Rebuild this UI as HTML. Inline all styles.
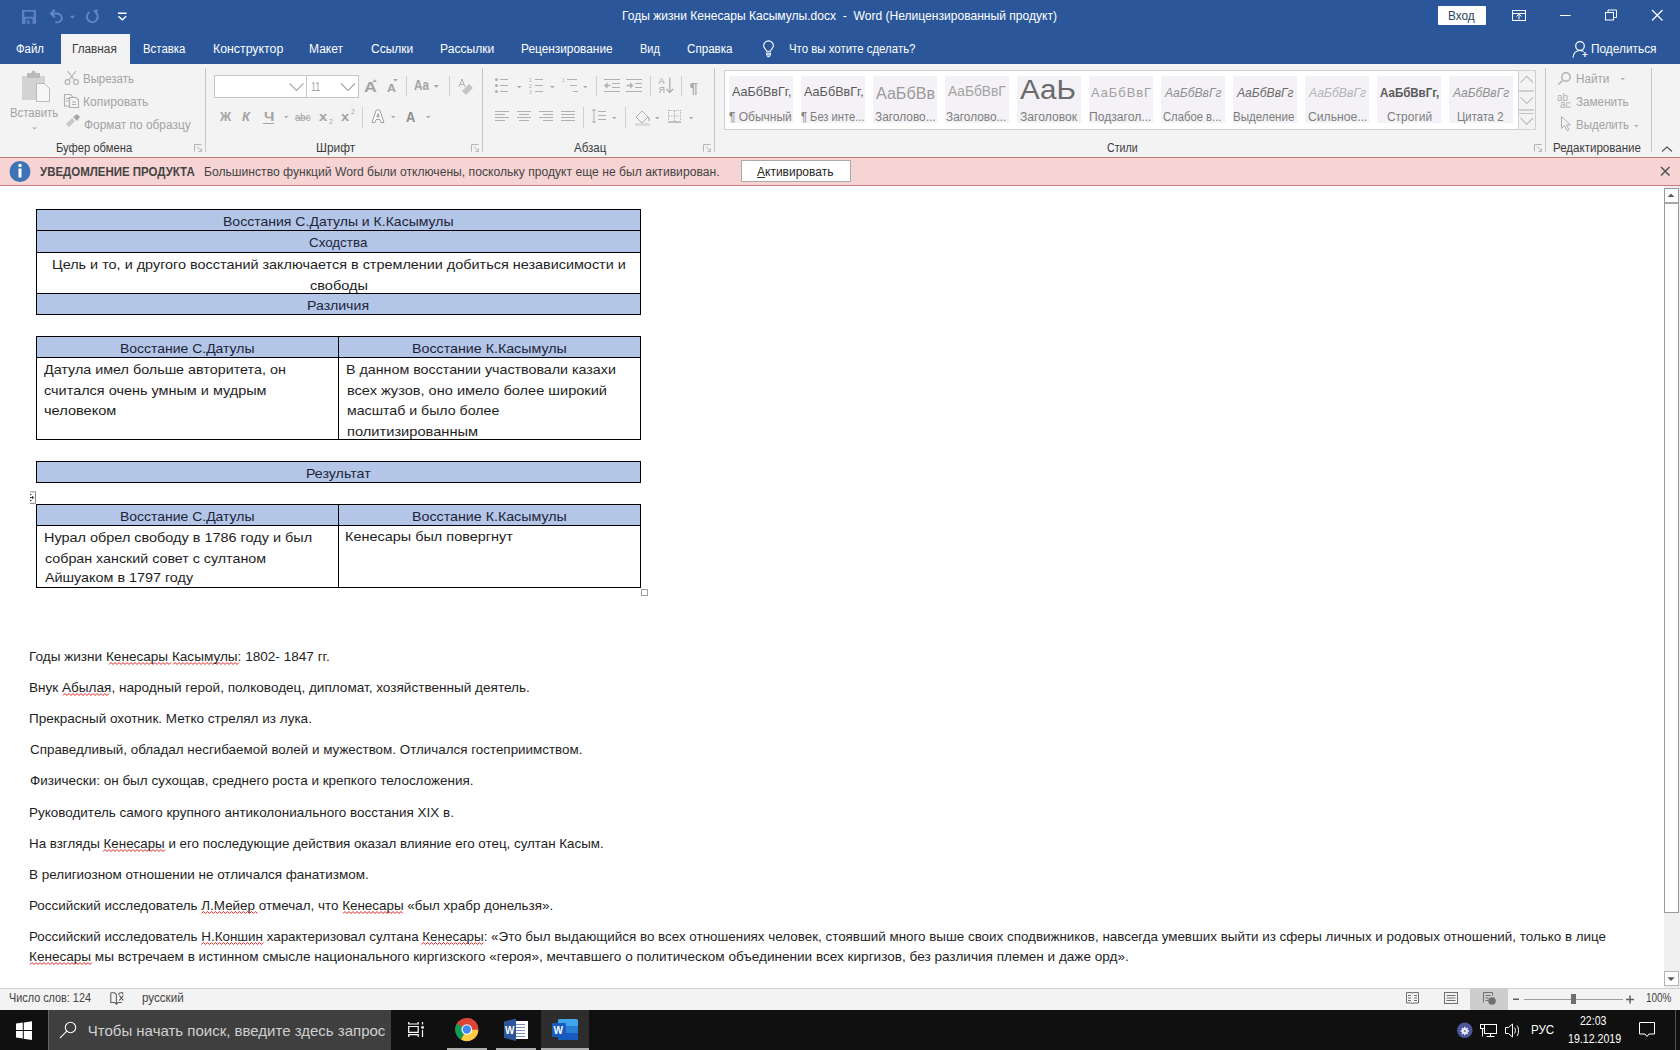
<!DOCTYPE html>
<html><head><meta charset="utf-8"><title>Word</title>
<style>
html,body{margin:0;padding:0}
body{width:1680px;height:1050px;overflow:hidden;position:relative;background:#fff;font-family:"Liberation Sans",sans-serif}
.a{position:absolute}
.t{position:absolute;white-space:nowrap;transform-origin:0 0}
svg{position:absolute;overflow:visible}
</style></head><body>
<!-- ===== TITLE + TABS ===== -->
<div class="a" style="left:0;top:0;width:1680px;height:64px;background:#2b579a"></div>
<div class="a" style="left:61px;top:34px;width:69px;height:30px;background:#f3f3f3"></div>
<!-- QAT icons -->
<svg style="left:0;top:0" width="140" height="34">
  <rect x="22" y="10" width="14" height="13.8" fill="#5f82c2"/>
  <rect x="24.3" y="11.6" width="9.4" height="5.2" fill="#2b579a"/>
  <rect x="25.6" y="18.6" width="7" height="5.2" fill="#2b579a"/>
  <rect x="27.2" y="20.4" width="2.2" height="3.4" fill="#5f82c2"/>
  <g fill="none" stroke="#628ac8" stroke-width="1.9">
    <path d="M51 13.5h5.5c3.2 0 5.3 2.2 5.3 4.6s-2 4.3-5 4.3h-1.5"/>
    <path d="M54.8 9.8L51 13.5l3.8 3.7"/>
    <path d="M89.4 12.2A5.4 5.4 0 1 0 95.8 12.6"/>
  </g>
  <path d="M93.2 10.2l4.6-0.6-1.2 4.6z" fill="#628ac8"/>
  <path d="M69.8 15.8h5.2l-2.6 2.6z" fill="#628ac8"/>
  <g fill="none" stroke="#ffffff" stroke-width="1.4">
    <path d="M118 13.3h8.6M118.4 16.2l3.9 3.6 3.9-3.6"/>
  </g>
</svg>
<!-- window buttons -->
<div class="a" style="left:1438px;top:6px;width:48px;height:19px;background:#ffffff;border-radius:1px"></div>
<svg style="left:0;top:0" width="1680" height="64">
  <g fill="none" stroke="#ffffff" stroke-width="1">
    <rect x="1512.5" y="10.5" width="13" height="10"/>
    <path d="M1512.5 13.5h13M1519 19.5v-5M1516.5 16.5l2.5-2.5 2.5 2.5"/>
    <path d="M1560 15.5h10.5"/>
    <rect x="1605.5" y="12.5" width="8" height="7.5"/>
    <path d="M1608 12.5v-2.5h8.5v7.5h-2.5"/>
    <path d="M1652 10l10.5 10.5M1662.5 10l-10.5 10.5" stroke-width="1.2"/>
  </g>
  <!-- lightbulb -->
  <g fill="none" stroke="#ffffff" stroke-width="1.1">
    <path d="M766.6 51.3C766.6 49.6 763.6 48.4 763.6 45.8A4.9 4.9 0 0 1 773.4 45.8C773.4 48.4 770.4 49.6 770.4 51.3Z"/>
    <rect x="766.6" y="53.2" width="3.8" height="1.8"/>
    <path d="M767.2 56.6h2.6"/>
  </g>
  <!-- person -->
  <g fill="none" stroke="#ffffff" stroke-width="1.2">
    <circle cx="1580" cy="46" r="4.3"/>
    <path d="M1573 57.5c0.5-4.5 3-7 7-7 1.5 0 2.7 0.4 3.6 1"/>
    <path d="M1582.5 54.5h5M1585 52v5"/>
  </g>
</svg>

<!-- ===== RIBBON ===== -->
<div class="a" style="left:0;top:64px;width:1680px;height:93px;background:#f3f3f3"></div>
<!-- group separators -->
<div class="a" style="left:205px;top:68px;width:1px;height:84px;background:#c8c8c8"></div>
<div class="a" style="left:482px;top:68px;width:1px;height:84px;background:#c8c8c8"></div>
<div class="a" style="left:714px;top:68px;width:1px;height:84px;background:#c8c8c8"></div>
<div class="a" style="left:1545px;top:68px;width:1px;height:84px;background:#c8c8c8"></div>
<div class="a" style="left:1651px;top:68px;width:1px;height:84px;background:#c8c8c8"></div>
<!-- launchers -->
<svg style="left:0;top:0" width="1680" height="160">
  <g fill="none" stroke="#b3b3b3" stroke-width="1">
    <path d="M194.5 151.5v-7h7M197 146.5l4.5 4.5M198.5 151.5h3v-3"/>
    <path d="M471.5 151.5v-7h7M474 146.5l4.5 4.5M475.5 151.5h3v-3"/>
    <path d="M703.5 151.5v-7h7M706 146.5l4.5 4.5M707.5 151.5h3v-3"/>
    <path d="M1534.5 151.5v-7h7M1537 146.5l4.5 4.5M1538.5 151.5h3v-3"/>
  </g>
  <path d="M1662 151.5l5-4.5 5 4.5" fill="none" stroke="#555" stroke-width="1.1"/>
</svg>
<!-- clipboard icons -->
<svg style="left:0;top:0" width="210" height="160">
  <rect x="22" y="76" width="23" height="24" fill="#d3d3d3"/>
  <rect x="27" y="73" width="13" height="5" fill="#b9b9b9"/>
  <circle cx="33.5" cy="72.5" r="2" fill="#b9b9b9"/>
  <path d="M36.5 83.5h8l5 5v13h-13z" fill="#f7f7f7" stroke="#b9b9b9"/>
  <path d="M32 127.5h5l-2.5 2z" fill="#b0b0b0"/>
  <g fill="none" stroke="#b0b0b0" stroke-width="1.1">
    <path d="M67.5 71l7 9M76 71l-7 9"/>
    <circle cx="67.5" cy="82" r="2.4"/>
    <circle cx="76" cy="82" r="2.4"/>
    <path d="M64.5 94.5h6l2 2v9.5h-8z"/>
    <path d="M69.5 97.5h6.5l2.5 2.5v7.5h-9z" fill="#f3f3f3"/>
    <path d="M66 98.5h3M66 101h3M72 102h4M72 104.5h4"/>
  </g>
  <path d="M66 124l6-6 3 3-6 6z" fill="#c8c8c8"/>
  <path d="M73 117l4-3 3 3-3 4z" fill="#a8a8a8"/>
</svg>
<!-- font group controls -->
<div class="a" style="left:214px;top:75px;width:92px;height:21px;background:#fff;border:1px solid #c6c6c6"></div>
<div class="a" style="left:306px;top:75px;width:51px;height:21px;background:#fff;border:1px solid #c6c6c6"></div>
<svg style="left:0;top:0" width="720" height="160">
  <g fill="none" stroke="#a8a8a8" stroke-width="1.1">
    <path d="M289.5 83.5l7 7 7-7M341 83.5l7 7 7-7"/>
  </g>
  <g fill="#a8a8a8">
    <path d="M372.5 82l2.2-2.8 2.2 2.8z"/>
    <path d="M393 79h5l-2.5 2.5z"/>
    <path d="M433.5 85h5.5l-2.75 2.75z"/>
    <path d="M284 116h4.5l-2.25 2.25z"/>
    <path d="M391 116h4.5l-2.25 2.25z"/>
    <path d="M426 116h4.5l-2.25 2.25z"/>
    <path d="M517 86h4.5l-2.25 2.25z"/>
    <path d="M550 86h4.5l-2.25 2.25z"/>
    <path d="M583 86h4.5l-2.25 2.25z"/>
    <path d="M612 117h4.5l-2.25 2.25z"/>
    <path d="M655 117h4.5l-2.25 2.25z"/>
    <path d="M689 117h4.5l-2.25 2.25z"/>
  </g>
  <g fill="#d0d0d0"><rect x="406" y="76" width="1" height="20"/><rect x="449" y="76" width="1" height="20"/><rect x="362" y="107" width="1" height="21"/>
  <rect x="596" y="76" width="1" height="20"/><rect x="650" y="76" width="1" height="20"/><rect x="681" y="76" width="1" height="20"/>
  <rect x="583" y="107" width="1" height="21"/><rect x="625" y="107" width="1" height="21"/></g>
  <path d="M372 122.5L376.3 110h3.4L384 122.5h-3l-1-3h-4l-1 3zM376.8 117h2.4L378 113.3z" fill="#ffffff" fill-rule="evenodd" stroke="#a0a0a0" stroke-width="1"/>
  <!-- eraser -->
  <path d="M462 91l7-7 4 4-7 7z" fill="#c4c4c4"/>
  <path d="M459 87l3-8 3 8M460 84.5h4" fill="none" stroke="#b0b0b0" stroke-width="1"/>
  <!-- underline for Ч, subscript digits -->
  <rect x="263" y="123" width="11" height="1" fill="#a8a8a8"/>
  <path d="M295 118h16" stroke="#a8a8a8" stroke-width="1"/>
  <text x="329" y="124" font-size="7" fill="#a8a8a8" font-family="Liberation Sans">2</text>
  <text x="351" y="114" font-size="7" fill="#a8a8a8" font-family="Liberation Sans">2</text>
  <!-- paragraph icons -->
  <g fill="none" stroke="#b0b0b0" stroke-width="1">
    <path d="M500 79.5h8M500 85.5h8M500 91.5h8"/>
    <path d="M535 79.5h8M535 85.5h8M535 91.5h8"/>
    <path d="M567 79.5h10M570 85.5h7M573 91.5h5"/>
    <path d="M604 79.5h16M612 83.5h8M612 87.5h8M604 91.5h16"/>
    <path d="M626 79.5h16M635 83.5h7M635 87.5h7M626 91.5h16"/>
    <path d="M669.8 77.5v15M666.6 89l3.2 3.5 3.2-3.5" stroke-width="1.3"/>
    <path d="M495 111.5h14M495 114.5h10M495 117.5h14M495 120.5h10"/>
    <path d="M517 111.5h14M519 114.5h10M517 117.5h14M519 120.5h10"/>
    <path d="M539 111.5h14M543 114.5h10M539 117.5h14M543 120.5h10"/>
    <path d="M561 111.5h14M561 114.5h14M561 117.5h14M561 120.5h14"/>
    <path d="M598 111.5h8M598 115.5h8M598 119.5h8M594 109v14M592 111l2-2 2 2M592 121l2 2 2-2"/>
    <path d="M668.5 110v11M680.5 110v11M669 110.5h11M674.5 111v10M669 116h11" stroke-dasharray="1 1.2" stroke="#a8a8a8"/>
    <path d="M668 122h13" stroke="#a0a0a0" stroke-width="1.2"/>
  </g>
  <g fill="#b0b0b0">
    <circle cx="496.5" cy="79.5" r="1.5"/><circle cx="496.5" cy="85.5" r="1.5"/><circle cx="496.5" cy="91.5" r="1.5"/>
    <path d="M604 85.5l3.5-3.2v6.4z"/><path d="M610.5 85.5h-4" stroke="#b0b0b0" stroke-width="1.5"/><path d="M633.5 85.5l-3.5-3.2v6.4z"/><path d="M626.5 85.5h4" stroke="#b0b0b0" stroke-width="1.5"/>
  </g>
  <text x="529" y="82" font-size="5" fill="#b0b0b0" font-family="Liberation Sans">1</text>
  <text x="529" y="88" font-size="5" fill="#b0b0b0" font-family="Liberation Sans">2</text>
  <text x="529" y="94" font-size="5" fill="#b0b0b0" font-family="Liberation Sans">3</text>
  <text x="562" y="82" font-size="5" fill="#b0b0b0" font-family="Liberation Sans">1</text>
  <text x="658.6" y="84.3" font-size="9" fill="#a8a8a8" font-family="Liberation Sans">А</text>
  <text x="658.6" y="92.6" font-size="9" fill="#a8a8a8" font-family="Liberation Sans">Я</text>
  <text x="689.5" y="93" font-size="15" fill="#a8a8a8" font-family="Liberation Sans" font-weight="700">¶</text>
  <!-- shading -->
  <path d="M636 117l6-6 6 6-6 6z" fill="none" stroke="#b0b0b0" stroke-width="1"/>
  <path d="M648 117c1 2 2 3 1 4" fill="none" stroke="#b0b0b0" stroke-width="1.5"/>
  <rect x="635" y="123" width="15" height="3" fill="#dcdcdc"/>
</svg>
<!-- styles gallery -->
<div class="a" style="left:724px;top:70px;width:809px;height:58px;background:#ffffff;border:1px solid #cfcfcf"></div>
<div class="a" style="left:729px;top:76px;width:64px;height:47px;background:#f4f2f6"></div>
<div class="a" style="left:801px;top:76px;width:64px;height:47px;background:#f4f2f6"></div>
<div class="a" style="left:873px;top:76px;width:64px;height:47px;background:#f4f2f6"></div>
<div class="a" style="left:945px;top:76px;width:64px;height:47px;background:#f4f2f6"></div>
<div class="a" style="left:1017px;top:76px;width:64px;height:47px;background:#f4f2f6"></div>
<div class="a" style="left:1089px;top:76px;width:64px;height:47px;background:#f4f2f6"></div>
<div class="a" style="left:1161px;top:76px;width:64px;height:47px;background:#f4f2f6"></div>
<div class="a" style="left:1233px;top:76px;width:64px;height:47px;background:#f4f2f6"></div>
<div class="a" style="left:1305px;top:76px;width:64px;height:47px;background:#f4f2f6"></div>
<div class="a" style="left:1377px;top:76px;width:64px;height:47px;background:#f4f2f6"></div>
<div class="a" style="left:1449px;top:76px;width:64px;height:47px;background:#f4f2f6"></div>
<div class="a" style="left:873px;top:76px;width:64px;height:47px;overflow:hidden"></div>
<div class="a" style="left:1518px;top:70px;width:16px;height:58px;background:#f3f3f3;border:1px solid #d4d4d4;border-right:1px solid #cfcfcf"></div>
<svg style="left:0;top:0" width="1680" height="160">
  <g fill="none" stroke="#c0c0c0" stroke-width="1">
    <path d="M1519 91h15M1519 110h15" stroke-width="2" stroke="#d0d0d0"/>
    <path d="M1519 113.5h15" stroke="#c4c4c4"/>
    <path d="M1520.5 82.5l6.3-6.2 6.3 6.2M1520.5 97.3l6.3 6.2 6.3-6.2M1520.5 118l6.3 6.2 6.3-6.2" stroke="#bdbdbd" stroke-width="1.1"/>
  </g>
  <!-- editing icons -->
  <g fill="none" stroke="#b0b0b0" stroke-width="1.4">
    <circle cx="1566" cy="77" r="4.2"/>
    <path d="M1562.5 80.5l-4 4"/>
  </g>
  <path d="M1620.5 78h4.5l-2.25 2.25z" fill="#b0b0b0"/>
  <path d="M1634 125h4.5l-2.25 2.25z" fill="#b0b0b0"/>
  <text x="1557" y="101" font-size="10" fill="#b0b0b0" font-family="Liberation Sans">ab</text>
  <text x="1560" y="108" font-size="10" fill="#b0b0b0" font-family="Liberation Sans">ac</text>
  <path d="M1561.5 116.5v12l3-3 2.5 5 2-1-2.5-4.5h4z" fill="none" stroke="#b0b0b0" stroke-width="1"/>
</svg>

<!-- ===== NOTIFICATION ===== -->
<div class="a" style="left:0;top:157px;width:1680px;height:27px;background:#f7d4d4;border-top:1px solid #c4787e;border-bottom:1px solid #c4787e"></div>
<svg style="left:0;top:0" width="1680" height="190">
  <circle cx="20" cy="171.5" r="10.5" fill="#3c74b6"/>
  <circle cx="20" cy="165.5" r="1.7" fill="#fff"/>
  <rect x="18.5" y="168.5" width="3" height="9" fill="#fff"/>
  <path d="M1661 167l8.5 8.5M1669.5 167l-8.5 8.5" stroke="#555" stroke-width="1.6"/>
</svg>
<div class="a" style="left:741px;top:160px;width:108px;height:20px;background:#ffffff;border:1px solid #a9a9a9"></div>
<div class="a" style="left:757px;top:177px;width:8px;height:1px;background:#333"></div>

<!-- ===== DOCUMENT ===== -->
<!-- table 1 -->
<div class="a" style="left:36px;top:209px;width:603px;height:104px;border:1px solid #000;background:#fff"></div>
<div class="a" style="left:37px;top:210px;width:603px;height:20px;background:#b4c6e7"></div>
<div class="a" style="left:37px;top:231px;width:603px;height:21px;background:#b4c6e7"></div>
<div class="a" style="left:37px;top:294px;width:603px;height:20px;background:#b4c6e7"></div>
<div class="a" style="left:36px;top:230px;width:605px;height:1px;background:#000"></div>
<div class="a" style="left:36px;top:252px;width:605px;height:1px;background:#000"></div>
<div class="a" style="left:36px;top:293px;width:605px;height:1px;background:#000"></div>
<!-- table 2 -->
<div class="a" style="left:36px;top:336px;width:603px;height:102px;border:1px solid #000;background:#fff"></div>
<div class="a" style="left:37px;top:337px;width:603px;height:20px;background:#b4c6e7"></div>
<div class="a" style="left:36px;top:357px;width:605px;height:1px;background:#000"></div>
<div class="a" style="left:338px;top:336px;width:1px;height:104px;background:#000"></div>
<!-- table 3 -->
<div class="a" style="left:36px;top:461px;width:603px;height:20px;border:1px solid #000;background:#b4c6e7"></div>
<!-- marker -->
<svg style="left:0;top:0" width="60" height="520">
  <path d="M30 491.8h5.5v11.6h-5.5" fill="none" stroke="#8a8a8a" stroke-width="1"/>
  <circle cx="30.6" cy="494.5" r="0.8" fill="#333"/><circle cx="30.6" cy="500.5" r="0.8" fill="#333"/>
  <path d="M30 497.5h3.2M32 495.8l1.7 1.7-1.7 1.7" stroke="#333" stroke-width="1" fill="none"/>
</svg>
<!-- table 4 -->
<div class="a" style="left:36px;top:504px;width:603px;height:82px;border:1px solid #000;background:#fff"></div>
<div class="a" style="left:37px;top:505px;width:603px;height:20px;background:#b4c6e7"></div>
<div class="a" style="left:36px;top:525px;width:605px;height:1px;background:#000"></div>
<div class="a" style="left:338px;top:504px;width:1px;height:84px;background:#000"></div>
<div class="a" style="left:641px;top:589px;width:5px;height:5px;border:1px solid #a0a0a0;background:#fff"></div>
<!-- spelling squiggles -->
<svg style="left:0;top:0" width="1680" height="1000"><path d="M109.0 664.5L111.0 662.5L113.0 664.5L115.0 662.5L117.0 664.5L119.0 662.5L121.0 664.5L123.0 662.5L125.0 664.5L127.0 662.5L129.0 664.5L131.0 662.5L133.0 664.5L135.0 662.5L137.0 664.5L139.0 662.5L141.0 664.5L143.0 662.5L145.0 664.5L147.0 662.5L149.0 664.5L151.0 662.5L153.0 664.5L155.0 662.5L157.0 664.5L159.0 662.5L161.0 664.5L163.0 662.5L165.0 664.5L167.0 662.5L169.0 664.5L171.0 662.5 M173.0 664.5L175.0 662.5L177.0 664.5L179.0 662.5L181.0 664.5L183.0 662.5L185.0 664.5L187.0 662.5L189.0 664.5L191.0 662.5L193.0 664.5L195.0 662.5L197.0 664.5L199.0 662.5L201.0 664.5L203.0 662.5L205.0 664.5L207.0 662.5L209.0 664.5L211.0 662.5L213.0 664.5L215.0 662.5L217.0 664.5L219.0 662.5L221.0 664.5L223.0 662.5L225.0 664.5L227.0 662.5L229.0 664.5L231.0 662.5L233.0 664.5L235.0 662.5L237.0 664.5L239.0 662.5 M63.0 695.5L65.0 693.5L67.0 695.5L69.0 693.5L71.0 695.5L73.0 693.5L75.0 695.5L77.0 693.5L79.0 695.5L81.0 693.5L83.0 695.5L85.0 693.5L87.0 695.5L89.0 693.5L91.0 695.5L93.0 693.5L95.0 695.5L97.0 693.5L99.0 695.5L101.0 693.5L103.0 695.5L105.0 693.5L107.0 695.5L109.0 693.5 M103.0 851.5L105.0 849.5L107.0 851.5L109.0 849.5L111.0 851.5L113.0 849.5L115.0 851.5L117.0 849.5L119.0 851.5L121.0 849.5L123.0 851.5L125.0 849.5L127.0 851.5L129.0 849.5L131.0 851.5L133.0 849.5L135.0 851.5L137.0 849.5L139.0 851.5L141.0 849.5L143.0 851.5L145.0 849.5L147.0 851.5L149.0 849.5L151.0 851.5L153.0 849.5L155.0 851.5L157.0 849.5L159.0 851.5L161.0 849.5L163.0 851.5L165.0 849.5 M201.4 913.5L203.4 911.5L205.4 913.5L207.4 911.5L209.4 913.5L211.4 911.5L213.4 913.5L215.4 911.5L217.4 913.5L219.4 911.5L221.4 913.5L223.4 911.5L225.4 913.5L227.4 911.5L229.4 913.5L231.4 911.5L233.4 913.5L235.4 911.5L237.4 913.5L239.4 911.5L241.4 913.5L243.4 911.5L245.4 913.5L247.4 911.5L249.4 913.5L251.4 911.5L253.4 913.5L255.4 911.5L257.4 913.5 M343.0 913.5L345.0 911.5L347.0 913.5L349.0 911.5L351.0 913.5L353.0 911.5L355.0 913.5L357.0 911.5L359.0 913.5L361.0 911.5L363.0 913.5L365.0 911.5L367.0 913.5L369.0 911.5L371.0 913.5L373.0 911.5L375.0 913.5L377.0 911.5L379.0 913.5L381.0 911.5L383.0 913.5L385.0 911.5L387.0 913.5L389.0 911.5L391.0 913.5L393.0 911.5L395.0 913.5L397.0 911.5L399.0 913.5L401.0 911.5L403.0 913.5 M201.4 944.5L203.4 942.5L205.4 944.5L207.4 942.5L209.4 944.5L211.4 942.5L213.4 944.5L215.4 942.5L217.4 944.5L219.4 942.5L221.4 944.5L223.4 942.5L225.4 944.5L227.4 942.5L229.4 944.5L231.4 942.5L233.4 944.5L235.4 942.5L237.4 944.5L239.4 942.5L241.4 944.5L243.4 942.5L245.4 944.5L247.4 942.5L249.4 944.5L251.4 942.5L253.4 944.5L255.4 942.5L257.4 944.5L259.4 942.5L261.4 944.5L263.4 942.5 M421.4 944.5L423.4 942.5L425.4 944.5L427.4 942.5L429.4 944.5L431.4 942.5L433.4 944.5L435.4 942.5L437.4 944.5L439.4 942.5L441.4 944.5L443.4 942.5L445.4 944.5L447.4 942.5L449.4 944.5L451.4 942.5L453.4 944.5L455.4 942.5L457.4 944.5L459.4 942.5L461.4 944.5L463.4 942.5L465.4 944.5L467.4 942.5L469.4 944.5L471.4 942.5L473.4 944.5L475.4 942.5L477.4 944.5L479.4 942.5L481.4 944.5L483.4 942.5 M30.0 964.5L32.0 962.5L34.0 964.5L36.0 962.5L38.0 964.5L40.0 962.5L42.0 964.5L44.0 962.5L46.0 964.5L48.0 962.5L50.0 964.5L52.0 962.5L54.0 964.5L56.0 962.5L58.0 964.5L60.0 962.5L62.0 964.5L64.0 962.5L66.0 964.5L68.0 962.5L70.0 964.5L72.0 962.5L74.0 964.5L76.0 962.5L78.0 964.5L80.0 962.5L82.0 964.5L84.0 962.5L86.0 964.5L88.0 962.5L90.0 964.5L92.0 962.5" fill="none" stroke="#dd2222" stroke-width="1"/></svg>
<!-- scrollbar -->
<div class="a" style="left:1664px;top:186px;width:16px;height:802px;background:#f0f0f0"></div>
<div class="a" style="left:1664px;top:188px;width:13px;height:723px;background:#ffffff;border:1px solid #9a9a9a"></div>
<div class="a" style="left:1665px;top:202px;width:13px;height:2px;background:#a6a6a6"></div>
<div class="a" style="left:1664px;top:971px;width:13px;height:13px;background:#ffffff;border:1px solid #b5b5b5"></div>
<svg style="left:0;top:0" width="1680" height="1000">
  <path d="M1667.5 197l3.5-3.5 3.5 3.5z" fill="#606060"/>
  <path d="M1667.3 977.2h7.4l-3.7 3.8z" fill="#5a5a5a"/>
</svg>

<!-- ===== STATUS BAR ===== -->
<div class="a" style="left:0;top:988px;width:1680px;height:22px;background:#f3f3f3;border-top:1px solid #cfcfcf"></div>
<div class="a" style="left:1470px;top:989px;width:38px;height:21px;background:#cdcdcd"></div>
<svg style="left:0;top:0" width="1680" height="1010">
  <g fill="none" stroke="#707070" stroke-width="1">
    <path d="M110.8 992.8h3.8l1.8 1.8M116.4 994.5v9.5M110.8 992.8v9.7h4l1.6 1.6 1.6-1.6h4M118.2 994.6l1.8-1.8h2.7v1.8" stroke="#606060" stroke-width="1.1"/>
    <path d="M119.3 995.5l4 5M123.3 995.5l-4 5" stroke="#505050" stroke-width="1.2"/>
    <path d="M1406.5 992.5h5.5l0.5 1 0.5-1h5.5v10.5h-5.5l-0.5 1-0.5-1h-5.5z"/>
    <path d="M1408 995.5h3M1408 998h3M1408 1000.5h3M1414 995.5h3M1414 998h3M1414 1000.5h3"/>
    <rect x="1444.5" y="992.5" width="13" height="11"/>
    <path d="M1446.5 995.5h9M1446.5 998h9M1446.5 1000.5h9"/>
    <path d="M1483.5 1002.5v-10h9v3M1485.5 995.5h5M1485.5 998h3M1485.5 1000.5h3"/>
  </g>
  <circle cx="1492" cy="1001" r="3.8" fill="#6f6f6f"/>
  <rect x="1513" y="998.5" width="6" height="1.5" fill="#606060"/>
  <rect x="1524" y="999" width="99" height="1" fill="#9d9d9d"/>
  <rect x="1571" y="994" width="5" height="10" fill="#6f6f6f"/>
  <path d="M1626 999.5h8M1630 995.5v8" stroke="#606060" stroke-width="1.5"/>
</svg>

<!-- ===== TASKBAR ===== -->
<div class="a" style="left:0;top:1010px;width:1680px;height:40px;background:#101010"></div>
<div class="a" style="left:48px;top:1010px;width:343px;height:40px;background:#3f3f3f;box-shadow:inset 1px 0 0 #646464"></div>
<div class="a" style="left:541px;top:1010px;width:48px;height:40px;background:#2d2d2d"></div>
<div class="a" style="left:447px;top:1048px;width:40px;height:2px;background:#aeaeae"></div>
<div class="a" style="left:496px;top:1048px;width:40px;height:2px;background:#aeaeae"></div>
<div class="a" style="left:541px;top:1048px;width:48px;height:2px;background:#aeaeae"></div>
<div class="a" style="left:1675px;top:1010px;width:1px;height:40px;background:#555"></div>
<svg style="left:0;top:0" width="1680" height="1050">
  <!-- windows logo -->
  <path d="M16 1023.5l6.8-1v7.6h-6.8zM23.8 1022.4l8.2-1.2v8.9h-8.2zM16 1031h6.8v7.6l-6.8-1zM23.8 1031h8.2v8.9l-8.2-1.2z" fill="#ffffff"/>
  <!-- search -->
  <circle cx="70.5" cy="1027.5" r="5.2" fill="none" stroke="#ffffff" stroke-width="1.1"/>
  <path d="M66.8 1031.2l-7 7" stroke="#ffffff" stroke-width="1.1"/>
  <!-- task view -->
  <g fill="none" stroke="#ffffff" stroke-width="1.2">
    <path d="M408.7 1022v2h9.5v-2M408.7 1037v-2.3h9.5v2.3M408.7 1026.5h9.5v5.8h-9.5z"/>
    <path d="M422.5 1022v2.5M422.5 1030v7"/>
    <rect x="421.3" y="1026.2" width="2.5" height="2.4" fill="#fff" stroke="none"/>
  </g>
  <!-- chrome -->
  <circle cx="466.8" cy="1029.5" r="11.5" fill="#db4437"/>
  <path d="M466.8 1029.5L456.8 1023.8A11.5 11.5 0 0 0 461 1039.5z" fill="#0f9d58"/>
  <path d="M466.8 1029.5L461 1039.5A11.5 11.5 0 0 0 478.3 1029.5z" fill="#ffcd40"/>
  <path d="M466.8 1029.5L478.3 1029.5A11.5 11.5 0 0 0 466.8 1018z" fill="#db4437"/>
  <circle cx="466.8" cy="1029.5" r="5.3" fill="#fff"/>
  <circle cx="466.8" cy="1029.5" r="4.2" fill="#4285f4"/>
  <!-- word old -->
  <rect x="509" y="1021" width="19" height="18" fill="#ffffff"/>
  <path d="M512 1024.5h13M512 1027.5h13M512 1030.5h13M512 1033.5h13M512 1036.5h13" stroke="#7a8db5" stroke-width="1"/>
  <path d="M504 1021.5l12-3v22.5l-12-3z" fill="#2b579a"/>
  <text x="505" y="1034" font-size="10" font-weight="700" fill="#fff" font-family="Liberation Sans">W</text>
  <!-- word new -->
  <rect x="558" y="1019" width="20" height="21" rx="1.5" fill="#41a5ee"/>
  <rect x="558" y="1026" width="20" height="7" fill="#2b7cd3"/>
  <rect x="558" y="1033" width="20" height="7" fill="#185abd"/>
  <rect x="552" y="1023" width="14" height="14" rx="1" fill="#185abd"/>
  <text x="553.5" y="1034" font-size="10" font-weight="700" fill="#fff" font-family="Liberation Sans">W</text>
  <!-- tray -->
  <circle cx="1464.8" cy="1030.3" r="7.8" fill="#4b569c"/>
  <circle cx="1464.8" cy="1031" r="3" fill="#f0f0ff"/>
  <path d="M1467.40 1031.00L1469.00 1031.00 M1466.64 1032.84L1467.77 1033.97 M1464.80 1033.60L1464.80 1035.20 M1462.96 1032.84L1461.83 1033.97 M1462.20 1031.00L1460.60 1031.00 M1462.96 1029.16L1461.83 1028.03 M1464.80 1028.40L1464.80 1026.80 M1466.64 1029.16L1467.77 1028.03" stroke="#f0f0ff" stroke-width="1.3"/>
  <circle cx="1464.8" cy="1031" r="1.2" fill="#8890a0"/>
  <g fill="none" stroke="#ffffff" stroke-width="1">
    <rect x="1484.5" y="1024.5" width="12" height="9"/>
    <path d="M1490.5 1033.5v3M1486.5 1036.5h8"/>
    <rect x="1480.5" y="1024.5" width="4" height="4"/>
    <path d="M1482.5 1028.5v8"/>
    <path d="M1505.5 1027.5h3l4-3.5v13l-4-3.5h-3z"/>
    <path d="M1514.5 1027.5c1.2 1.5 1.2 4.5 0 6M1517 1025.5c2 2.5 2 8 0 10.5"/>
    <path d="M1639.5 1022.5h15v11.5h-5.5l-2 2.5-2-2.5h-5.5z"/>
  </g>
</svg>

<div class="t" style="left:621.63px;top:10.00px;font-size:12.5px;line-height:12.5px;color:#ffffff;transform:scaleX(0.9652)">Годы жизни Кенесары Касымулы.docx&nbsp; - &nbsp;Word (Нелицензированный продукт)</div>
<div class="t" style="left:1448.44px;top:10.00px;font-size:12.3px;line-height:12.3px;color:#2b3f60;transform:scaleX(0.9609)">Вход</div>
<div class="t" style="left:15.70px;top:43.00px;font-size:12.5px;line-height:12.5px;color:#ffffff;transform:scaleX(0.9068)">Файл</div>
<div class="t" style="left:143.19px;top:43.00px;font-size:12.5px;line-height:12.5px;color:#ffffff;transform:scaleX(0.9119)">Вставка</div>
<div class="t" style="left:212.51px;top:43.00px;font-size:12.5px;line-height:12.5px;color:#ffffff;transform:scaleX(0.9855)">Конструктор</div>
<div class="t" style="left:309.44px;top:43.00px;font-size:12.5px;line-height:12.5px;color:#ffffff;transform:scaleX(0.9639)">Макет</div>
<div class="t" style="left:371.30px;top:43.00px;font-size:12.5px;line-height:12.5px;color:#ffffff;transform:scaleX(0.9586)">Ссылки</div>
<div class="t" style="left:440.33px;top:43.00px;font-size:12.5px;line-height:12.5px;color:#ffffff;transform:scaleX(0.9670)">Рассылки</div>
<div class="t" style="left:521.35px;top:43.00px;font-size:12.5px;line-height:12.5px;color:#ffffff;transform:scaleX(0.9491)">Рецензирование</div>
<div class="t" style="left:639.52px;top:43.00px;font-size:12.5px;line-height:12.5px;color:#ffffff;transform:scaleX(0.8781)">Вид</div>
<div class="t" style="left:687.40px;top:43.00px;font-size:12.5px;line-height:12.5px;color:#ffffff;transform:scaleX(0.9290)">Справка</div>
<div class="t" style="left:788.60px;top:43.00px;font-size:12.5px;line-height:12.5px;color:#ffffff;transform:scaleX(0.9151)">Что вы хотите сделать?</div>
<div class="t" style="left:1590.55px;top:43.00px;font-size:12.5px;line-height:12.5px;color:#ffffff;transform:scaleX(0.9486)">Поделиться</div>
<div class="t" style="left:72.36px;top:43.00px;font-size:12.5px;line-height:12.5px;color:#3a3a3a;transform:scaleX(0.9409)">Главная</div>
<div class="t" style="left:82.57px;top:73.00px;font-size:12.3px;line-height:12.3px;color:#a3a3a3;transform:scaleX(0.9308)">Вырезать</div>
<div class="t" style="left:82.51px;top:96.00px;font-size:12.3px;line-height:12.3px;color:#a3a3a3;transform:scaleX(0.9876)">Копировать</div>
<div class="t" style="left:83.50px;top:118.50px;font-size:12.3px;line-height:12.3px;color:#a3a3a3;transform:scaleX(0.9675)">Формат по образцу</div>
<div class="t" style="left:9.68px;top:107.00px;font-size:12.3px;line-height:12.3px;color:#a3a3a3;transform:scaleX(0.9247)">Вставить</div>
<div class="t" style="left:55.99px;top:142.00px;font-size:12.3px;line-height:12.3px;color:#3b3b3b;transform:scaleX(0.9109)">Буфер обмена</div>
<div class="t" style="left:311.00px;top:81.00px;font-size:12.3px;line-height:12.3px;color:#a3a3a3;transform:scaleX(0.7349)">11</div>
<div class="t" style="left:414.20px;top:78.00px;font-size:14px;line-height:14px;color:#a3a3a3;font-weight:700;transform:scaleX(0.8393)">Aa</div>
<div class="t" style="left:315.63px;top:141.50px;font-size:12.3px;line-height:12.3px;color:#3b3b3b;transform:scaleX(0.9667)">Шрифт</div>
<div class="t" style="left:574.00px;top:141.50px;font-size:12.3px;line-height:12.3px;color:#3b3b3b;transform:scaleX(0.9346)">Абзац</div>
<div class="t" style="left:1106.80px;top:141.50px;font-size:12.3px;line-height:12.3px;color:#3b3b3b;transform:scaleX(0.8634)">Стили</div>
<div class="t" style="left:1553.36px;top:141.50px;font-size:12.3px;line-height:12.3px;color:#3b3b3b;transform:scaleX(0.9382)">Редактирование</div>
<div class="t" style="left:1575.95px;top:73.00px;font-size:12.3px;line-height:12.3px;color:#a3a3a3;transform:scaleX(0.9468)">Найти</div>
<div class="t" style="left:1576.40px;top:96.00px;font-size:12.3px;line-height:12.3px;color:#a3a3a3;transform:scaleX(0.9517)">Заменить</div>
<div class="t" style="left:1575.97px;top:118.50px;font-size:12.3px;line-height:12.3px;color:#a3a3a3;transform:scaleX(0.9345)">Выделить</div>
<div class="t" style="left:219.65px;top:110.00px;font-size:13px;line-height:13px;color:#a3a3a3;font-weight:700;transform:scaleX(0.9462)">Ж</div>
<div class="t" style="left:242.00px;top:110.00px;font-size:13px;line-height:13px;color:#a3a3a3;font-weight:700;font-style:italic">К</div>
<div class="t" style="left:263.80px;top:110.00px;font-size:13px;line-height:13px;color:#a3a3a3;font-weight:700;transform:scaleX(1.1333)">Ч</div>
<div class="t" style="left:295.00px;top:112.00px;font-size:11px;line-height:11px;color:#a3a3a3;transform:scaleX(0.8774)">abc</div>
<div class="t" style="left:319.00px;top:110.00px;font-size:13px;line-height:13px;color:#a3a3a3;font-weight:700;transform:scaleX(1.1250)">x</div>
<div class="t" style="left:341.00px;top:110.00px;font-size:13px;line-height:13px;color:#a3a3a3;font-weight:700;transform:scaleX(1.1250)">x</div>
<div class="t" style="left:406.40px;top:109.00px;font-size:15px;line-height:15px;color:#8c8c8c;font-weight:700;transform:scaleX(0.8545)">A</div>
<div class="t" style="left:364.00px;top:78.60px;font-size:15px;line-height:15px;color:#a3a3a3;font-weight:700;transform:scaleX(1.1818)">A</div>
<div class="t" style="left:387.00px;top:82.60px;font-size:11px;line-height:11px;color:#a3a3a3;font-weight:700;transform:scaleX(1.1250)">A</div>
<div class="t" style="left:732.00px;top:85.00px;font-size:13px;line-height:13px;color:#595959;transform:scaleX(0.9672)">АаБбВвГг,</div>
<div class="t" style="left:729.40px;top:111.00px;font-size:12.3px;line-height:12.3px;color:#7d7d7d;transform:scaleX(0.9736)">¶ Обычный</div>
<div class="t" style="left:803.50px;top:85.00px;font-size:13px;line-height:13px;color:#595959;transform:scaleX(0.9721)">АаБбВвГг,</div>
<div class="t" style="left:801.00px;top:111.00px;font-size:12.3px;line-height:12.3px;color:#7d7d7d;transform:scaleX(0.9060)">¶ Без инте...</div>
<div class="t" style="left:875.80px;top:85.00px;font-size:17px;line-height:17px;color:#9a9a9a;transform:scaleX(0.9467)">АаБбВв</div>
<div class="t" style="left:874.50px;top:111.00px;font-size:12.3px;line-height:12.3px;color:#7d7d7d;transform:scaleX(0.9668)">Заголово...</div>
<div class="t" style="left:948.00px;top:84.20px;font-size:14px;line-height:14px;color:#a3a3a3;transform:scaleX(0.9821)">АаБбВвГ</div>
<div class="t" style="left:946.20px;top:111.00px;font-size:12.3px;line-height:12.3px;color:#7d7d7d;transform:scaleX(0.9636)">Заголово...</div>
<div class="t" style="left:1020.00px;top:76.60px;font-size:27px;line-height:27px;color:#6a6a6a;transform:scaleX(1.0968)">АаЬ</div>
<div class="t" style="left:1020.00px;top:111.00px;font-size:12.3px;line-height:12.3px;color:#7d7d7d;transform:scaleX(0.9857)">Заголовок</div>
<div class="t" style="left:1091.40px;top:86.00px;font-size:13px;line-height:13px;color:#a0a0a0;letter-spacing:1px;transform:scaleX(0.9899)">АаБбВвГ</div>
<div class="t" style="left:1089.01px;top:111.00px;font-size:12.3px;line-height:12.3px;color:#7d7d7d;transform:scaleX(0.9862)">Подзагол...</div>
<div class="t" style="left:1164.93px;top:86.00px;font-size:13px;line-height:13px;color:#8f8f8f;font-style:italic;transform:scaleX(0.9324)">АаБбВвГг</div>
<div class="t" style="left:1163.40px;top:111.00px;font-size:12.3px;line-height:12.3px;color:#7d7d7d;transform:scaleX(0.9149)">Слабое в...</div>
<div class="t" style="left:1236.63px;top:86.00px;font-size:13px;line-height:13px;color:#6b6b6b;font-style:italic;transform:scaleX(0.9332)">АаБбВвГг</div>
<div class="t" style="left:1233.06px;top:111.00px;font-size:12.3px;line-height:12.3px;color:#7d7d7d;transform:scaleX(0.9422)">Выделение</div>
<div class="t" style="left:1308.94px;top:86.00px;font-size:13px;line-height:13px;color:#b5b5b5;font-style:italic;transform:scaleX(0.9421)">АаБбВвГг</div>
<div class="t" style="left:1308.00px;top:111.00px;font-size:12.3px;line-height:12.3px;color:#7d7d7d;transform:scaleX(0.9894)">Сильное...</div>
<div class="t" style="left:1379.70px;top:86.00px;font-size:13px;line-height:13px;color:#5a5a5a;font-weight:700;transform:scaleX(0.8871)">АаБбВвГг,</div>
<div class="t" style="left:1386.60px;top:111.00px;font-size:12.3px;line-height:12.3px;color:#7d7d7d;transform:scaleX(0.9711)">Строгий</div>
<div class="t" style="left:1453.23px;top:86.00px;font-size:13px;line-height:13px;color:#8f8f8f;font-style:italic;transform:scaleX(0.9260)">АаБбВвГг</div>
<div class="t" style="left:1456.88px;top:111.00px;font-size:12.3px;line-height:12.3px;color:#7d7d7d;transform:scaleX(0.9201)">Цитата 2</div>
<div class="t" style="left:39.80px;top:166.00px;font-size:12.3px;line-height:12.3px;color:#444444;font-weight:700;transform:scaleX(0.9333)">УВЕДОМЛЕНИЕ ПРОДУКТА</div>
<div class="t" style="left:204.41px;top:166.00px;font-size:12.3px;line-height:12.3px;color:#444444;transform:scaleX(0.9867)">Большинство функций Word были отключены, поскольку продукт еще не был активирован.</div>
<div class="t" style="left:757.00px;top:166.00px;font-size:12.3px;line-height:12.3px;color:#262626;transform:scaleX(0.9757)">Активировать</div>
<div class="t" style="left:223.12px;top:215.00px;font-size:13.0px;line-height:13.0px;color:#1c2438;transform:scaleX(1.0795)">Восстания С.Датулы и К.Касымулы</div>
<div class="t" style="left:309.20px;top:235.80px;font-size:13.0px;line-height:13.0px;color:#1c2438;transform:scaleX(1.0281)">Сходства</div>
<div class="t" style="left:51.59px;top:258.30px;font-size:13.0px;line-height:13.0px;color:#1e1e1e;transform:scaleX(1.1085)">Цель и то, и другого восстаний заключается в стремлении добиться независимости и</div>
<div class="t" style="left:310.00px;top:279.00px;font-size:13.0px;line-height:13.0px;color:#1e1e1e;transform:scaleX(1.1172)">свободы</div>
<div class="t" style="left:307.21px;top:298.70px;font-size:13.0px;line-height:13.0px;color:#1c2438;transform:scaleX(1.0871)">Различия</div>
<div class="t" style="left:119.93px;top:341.60px;font-size:13.0px;line-height:13.0px;color:#1c2438;transform:scaleX(1.0737)">Восстание С.Датулы</div>
<div class="t" style="left:412.00px;top:341.60px;font-size:13.0px;line-height:13.0px;color:#1c2438;transform:scaleX(1.0955)">Восстание К.Касымулы</div>
<div class="t" style="left:44.10px;top:363.00px;font-size:13.0px;line-height:13.0px;color:#1e1e1e;transform:scaleX(1.1023)">Датула имел больше авторитета, он</div>
<div class="t" style="left:44.10px;top:383.80px;font-size:13.0px;line-height:13.0px;color:#1e1e1e;transform:scaleX(1.1118)">считался очень умным и мудрым</div>
<div class="t" style="left:44.10px;top:403.70px;font-size:13.0px;line-height:13.0px;color:#1e1e1e;transform:scaleX(1.1210)">человеком</div>
<div class="t" style="left:345.60px;top:363.00px;font-size:13.0px;line-height:13.0px;color:#1e1e1e;transform:scaleX(1.0972)">В данном восстании участвовали казахи</div>
<div class="t" style="left:346.70px;top:383.80px;font-size:13.0px;line-height:13.0px;color:#1e1e1e;transform:scaleX(1.1204)">всех жузов, оно имело более широкий</div>
<div class="t" style="left:346.70px;top:403.70px;font-size:13.0px;line-height:13.0px;color:#1e1e1e;transform:scaleX(1.0886)">масштаб и было более</div>
<div class="t" style="left:346.70px;top:424.50px;font-size:13.0px;line-height:13.0px;color:#1e1e1e;transform:scaleX(1.1269)">политизированным</div>
<div class="t" style="left:306.01px;top:466.50px;font-size:13.0px;line-height:13.0px;color:#1c2438;transform:scaleX(1.0934)">Результат</div>
<div class="t" style="left:119.93px;top:509.50px;font-size:13.0px;line-height:13.0px;color:#1c2438;transform:scaleX(1.0737)">Восстание С.Датулы</div>
<div class="t" style="left:412.00px;top:509.50px;font-size:13.0px;line-height:13.0px;color:#1c2438;transform:scaleX(1.0955)">Восстание К.Касымулы</div>
<div class="t" style="left:43.59px;top:531.20px;font-size:13.0px;line-height:13.0px;color:#1e1e1e;transform:scaleX(1.1110)">Нурал обрел свободу в 1786 году и был</div>
<div class="t" style="left:44.70px;top:551.80px;font-size:13.0px;line-height:13.0px;color:#1e1e1e;transform:scaleX(1.0972)">собран ханский совет с султаном</div>
<div class="t" style="left:44.70px;top:571.40px;font-size:13.0px;line-height:13.0px;color:#1e1e1e;transform:scaleX(1.1041)">Айшуаком в 1797 году</div>
<div class="t" style="left:345.49px;top:530.20px;font-size:13.0px;line-height:13.0px;color:#1e1e1e;transform:scaleX(1.1118)">Кенесары был повергнут</div>
<div class="t" style="left:29.16px;top:650.00px;font-size:13.0px;line-height:13.0px;color:#1e1e1e;transform:scaleX(1.0449)">Годы жизни Кенесары Касымулы: 1802- 1847 гг.</div>
<div class="t" style="left:29.16px;top:681.00px;font-size:13.0px;line-height:13.0px;color:#1e1e1e;transform:scaleX(1.0437)">Внук Абылая, народный герой, полководец, дипломат, хозяйственный деятель.</div>
<div class="t" style="left:29.16px;top:712.00px;font-size:13.0px;line-height:13.0px;color:#1e1e1e;transform:scaleX(1.0401)">Прекрасный охотник. Метко стрелял из лука.</div>
<div class="t" style="left:30.20px;top:743.00px;font-size:13.0px;line-height:13.0px;color:#1e1e1e;transform:scaleX(1.0305)">Справедливый, обладал несгибаемой волей и мужеством. Отличался гостеприимством.</div>
<div class="t" style="left:30.20px;top:774.30px;font-size:13.0px;line-height:13.0px;color:#1e1e1e;transform:scaleX(1.0373)">Физически: он был сухощав, среднего роста и крепкого телосложения.</div>
<div class="t" style="left:29.16px;top:805.70px;font-size:13.0px;line-height:13.0px;color:#1e1e1e;transform:scaleX(1.0366)">Руководитель самого крупного антиколониального восстания XIX в.</div>
<div class="t" style="left:29.17px;top:836.70px;font-size:13.0px;line-height:13.0px;color:#1e1e1e;transform:scaleX(1.0274)">На взгляды Кенесары и его последующие действия оказал влияние его отец, султан Касым.</div>
<div class="t" style="left:29.16px;top:867.80px;font-size:13.0px;line-height:13.0px;color:#1e1e1e;transform:scaleX(1.0368)">В религиозном отношении не отличался фанатизмом.</div>
<div class="t" style="left:29.17px;top:899.00px;font-size:13.0px;line-height:13.0px;color:#1e1e1e;transform:scaleX(1.0314)">Российский исследователь Л.Мейер отмечал, что Кенесары «был храбр донельзя».</div>
<div class="t" style="left:29.17px;top:930.00px;font-size:13.0px;line-height:13.0px;color:#1e1e1e;transform:scaleX(1.0309)">Российский исследователь Н.Коншин характеризовал султана Кенесары: «Это был выдающийся во всех отношениях человек, стоявший много выше своих сподвижников, навсегда умевших выйти из сферы личных и родовых отношений, только в лице</div>
<div class="t" style="left:29.16px;top:950.00px;font-size:13.0px;line-height:13.0px;color:#1e1e1e;transform:scaleX(1.0434)">Кенесары мы встречаем в истинном смысле национального киргизского «героя», мечтавшего о политическом объединении всех киргизов, без различия племен и даже орд».</div>
<div class="t" style="left:8.60px;top:992.00px;font-size:12.3px;line-height:12.3px;color:#444444;transform:scaleX(0.8816)">Число слов: 124</div>
<div class="t" style="left:142.00px;top:992.00px;font-size:12.3px;line-height:12.3px;color:#444444;transform:scaleX(0.9434)">русский</div>
<div class="t" style="left:1645.75px;top:992.00px;font-size:12.3px;line-height:12.3px;color:#444444;transform:scaleX(0.8091)">100%</div>
<div class="t" style="left:87.75px;top:1022.50px;font-size:15px;line-height:15px;color:#d0d0d0">Чтобы начать поиск, введите здесь запрос</div>
<div class="t" style="left:1531.07px;top:1024.00px;font-size:12.5px;line-height:12.5px;color:#ffffff;transform:scaleX(0.9290)">РУС</div>
<div class="t" style="left:1580.00px;top:1015.00px;font-size:12.5px;line-height:12.5px;color:#ffffff;transform:scaleX(0.8427)">22:03</div>
<div class="t" style="left:1567.90px;top:1032.50px;font-size:12.5px;line-height:12.5px;color:#ffffff;transform:scaleX(0.8497)">19.12.2019</div>
</body></html>
